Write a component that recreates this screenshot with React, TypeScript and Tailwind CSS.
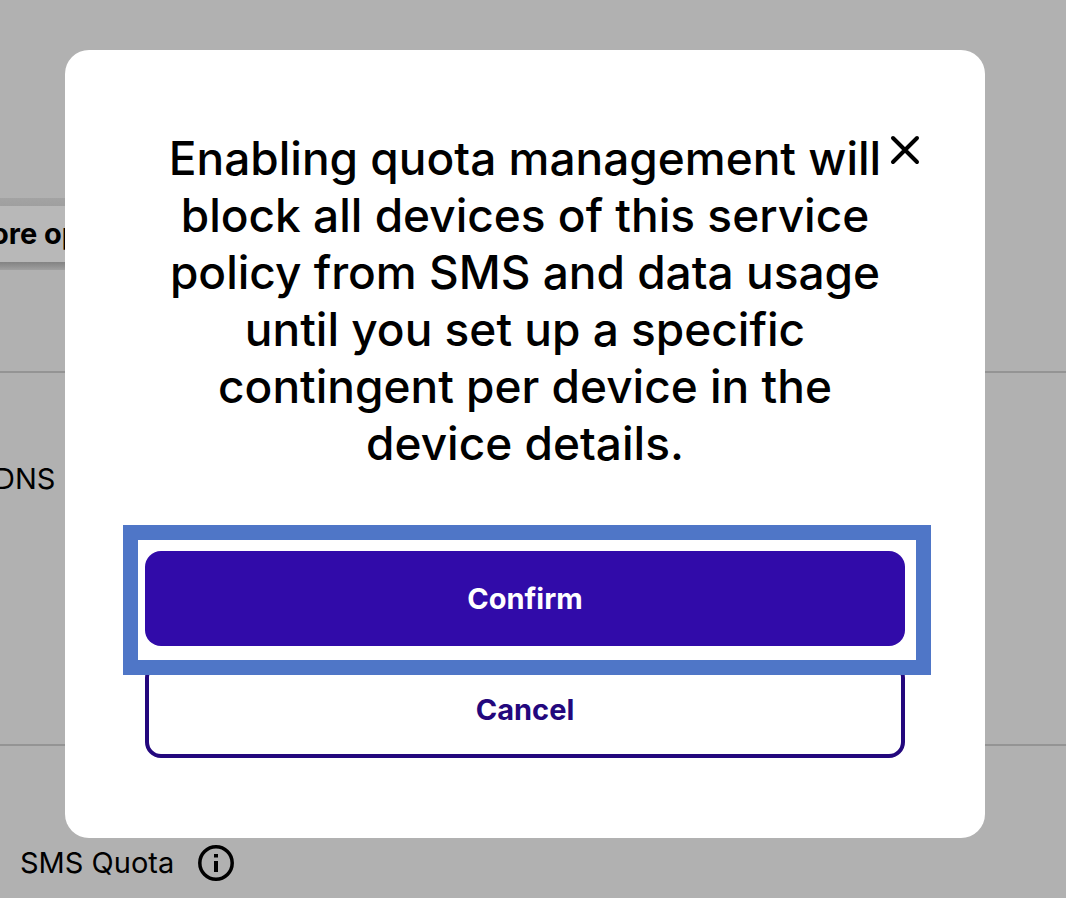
import React from 'react';

function Background() {
  return (
    <main className="flex min-h-screen flex-col overflow-hidden text-[29px] leading-9 text-black">
      <section className="h-[373px] border-b-2 border-[#949494] pt-[198px]">
        <div className="flex w-50 bg-linear-to-b from-[#a3a3a3] via-[#858585] via-90% to-[#a0a0a0] py-2">
          <button className="-ml-12 h-14 w-62 bg-[#b8b8b8] pl-3 text-left font-bold whitespace-nowrap">
            More options
          </button>
        </div>
      </section>
      <section className="h-[373px] border-b-2 border-[#949494] pt-[88px]">
        <p className="-ml-1.5">DNS</p>
      </section>
      <section className="flex items-start gap-6 pt-[99px] pl-5">
        <p>SMS Quota</p>
        <button aria-label="About SMS Quota">
          <svg width="36" height="36" viewBox="0 0 36 36" fill="none">
            <circle cx="18" cy="18" r="16.2" stroke="black" strokeWidth="3.5" />
            <path d="M18 16v11M18 9v3.6" stroke="black" strokeWidth="4" />
          </svg>
        </button>
      </section>
    </main>
  );
}

export default function App() {
  return (
    <div className="relative min-h-screen overflow-hidden bg-[#b1b1b1] font-['Inter',sans-serif]">
      <Background />
      <div className="absolute inset-0 flex items-start pt-[50px] pr-[81px] pl-[65px]">
        <div
          role="dialog"
          aria-modal="true"
          aria-labelledby="quota-title"
          className="relative w-full rounded-3xl bg-white p-20"
        >
          <h2 id="quota-title" className="text-center text-[46px] leading-[57px] font-medium text-black">
            Enabling quota management will
            <br />
            block all devices of this service
            <br />
            policy from SMS and data usage
            <br />
            until you set up a specific
            <br />
            contingent per device in the
            <br />
            device details.
          </h2>
          <button aria-label="Close" className="absolute top-20 right-15">
            <svg width="40" height="40" viewBox="0 0 40 40" fill="none" stroke="black" strokeWidth="4" strokeLinecap="round">
              <path d="M8 8l24 24M32 8L8 32" />
            </svg>
          </button>
          <div className="mt-[79px] flex flex-col gap-4 text-[29px] leading-9 font-bold">
            <div className="relative z-10">
              <button className="h-[95px] w-full rounded-2xl bg-[#310ba9] text-white">Confirm</button>
              <div className="pointer-events-none absolute -top-[26px] -right-[26px] -bottom-[29px] -left-[22px] border-[15px] border-[#4f76c7]" />
            </div>
            <button className="h-24 w-full rounded-2xl border-4 border-[#23077d] text-[#23077d]">Cancel</button>
          </div>
        </div>
      </div>
    </div>
  );
}
